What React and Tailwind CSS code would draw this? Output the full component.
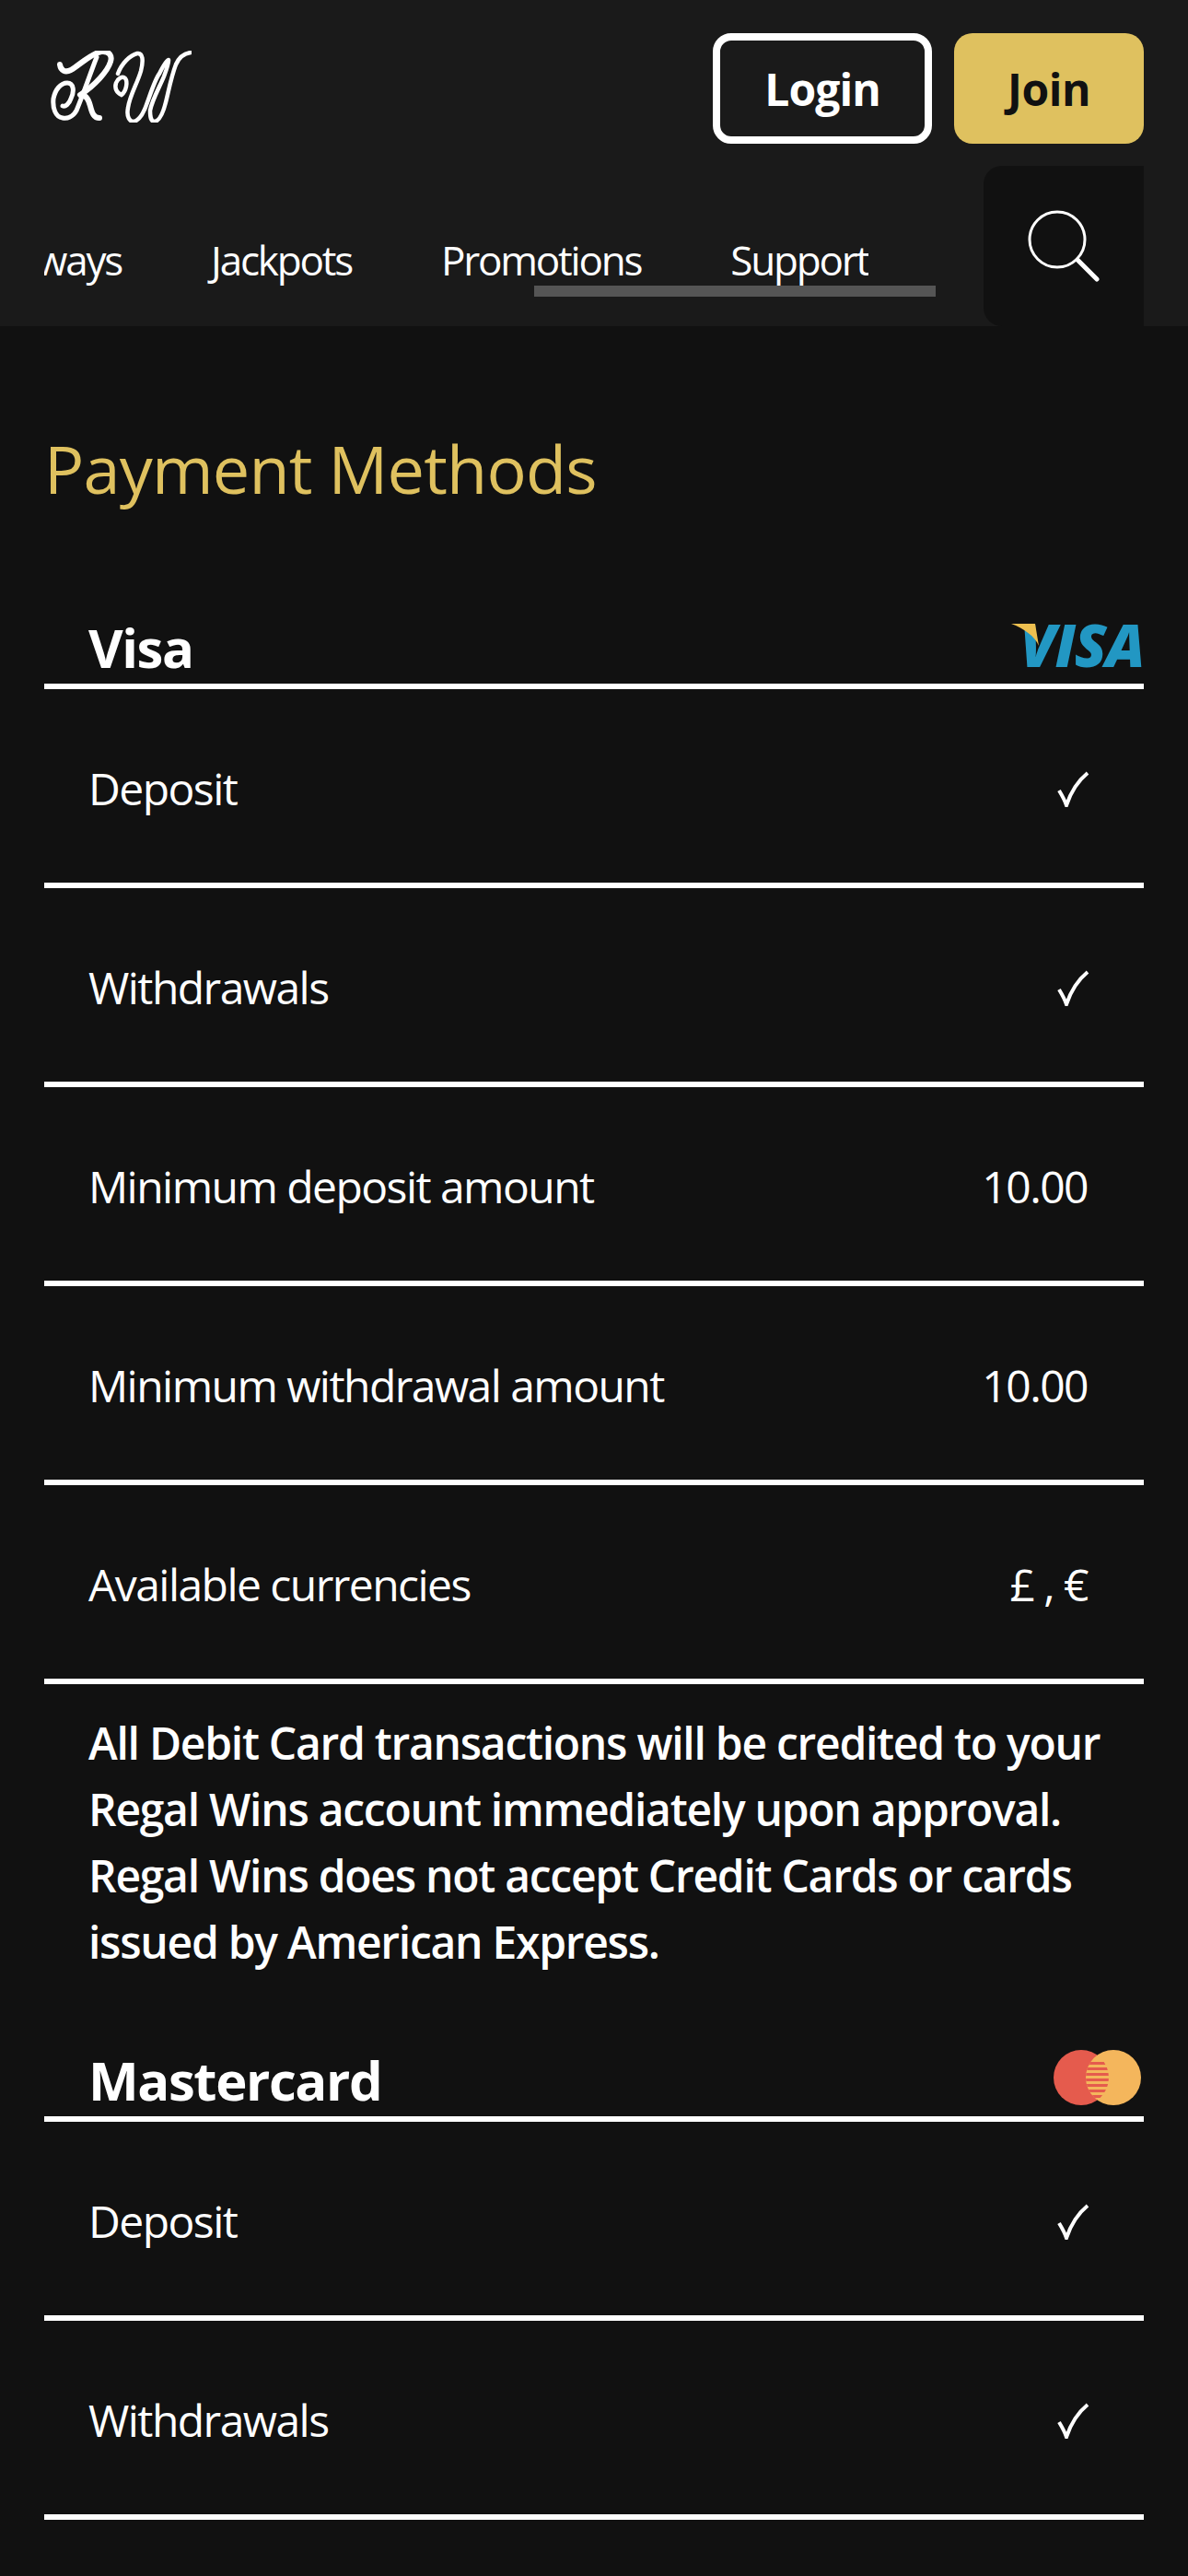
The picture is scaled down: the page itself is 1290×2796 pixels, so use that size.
import React from "react";

const visaRows = [
  { label: "Deposit", check: true },
  { label: "Withdrawals", check: true },
  { label: "Minimum deposit amount", value: "10.00" },
  { label: "Minimum withdrawal amount", value: "10.00" },
  { label: "Available currencies", value: "£ , €" },
];

const cardRows = [
  { label: "Deposit", check: true },
  { label: "Withdrawals", check: true },
];

function RwLogo() {
  return (
    <svg width="153" height="78" viewBox="0 0 153 78" fill="none" stroke="#fff" strokeLinecap="round" strokeLinejoin="round">
      <path d="M10 15 C11 22 16 24 22 21 C32 15 44 3 55 1 C64 0 67 6 65 12 C62 22 48 38 32 48" strokeWidth="6" />
      <path d="M50 7 C44 22 36 46 28 65 C24 72 18 74 13 73 C5 72 2 62 3 52 C5 42 11 35 18 35 C25 35 26 44 22 52 C20 58 16 61 13 60" strokeWidth="5" />
      <path d="M33 48 C38 48 41 52 43 60 C45 68 47 73 53 73" strokeWidth="6" />
      <path d="M77 48 C72 46 69 41 71 35 C73 30 78 27 81 30 C84 34 82 44 77 48" strokeWidth="4.5" />
      <path d="M73 25 C77 14 86 5 94 3 C100 2 101 10 98 22 C94 36 86 48 84 62 C82 72 86 77 90 77 C96 76 101 68 105 56 C110 42 114 30 118 25 C122 17 126 10 128 10 C129 12 126 20 123 28 C118 40 110 54 108 65 C108 73 109 77 113 77 C118 76 122 68 125 56 C128 44 131 28 136 15 C139 8 145 3 152 2" strokeWidth="4.5" />
    </svg>
  );
}

function SearchIcon() {
  return (
    <svg width="78" height="78" viewBox="0 0 78 78" fill="none" stroke="#fff">
      <circle cx="32" cy="32" r="30" strokeWidth="3" />
      <path d="M54 54 L75 75" strokeWidth="5" strokeLinecap="round" />
    </svg>
  );
}

function CheckMark() {
  return (
    <svg className="-mr-[3px]" width="36" height="40" viewBox="0 0 36 40" fill="none" stroke="#fff" strokeWidth="4">
      <path d="M2 22 C5 27 8 32 10 38 C14 26 22 12 33 3" />
    </svg>
  );
}

function VisaLogo() {
  return (
    <div className="relative flex h-[46px] w-[144px] items-center justify-end">
      <span className="text-[64px] leading-none font-extrabold tracking-[-1.5px] text-[#2297c3] italic">VISA</span>
      <svg className="absolute top-0 left-0" width="32" height="26" viewBox="0 0 32 26">
        <path d="M0 0 L26 0 L30 24 C26 14 14 5 0 0 Z" fill="#eec050" />
      </svg>
    </div>
  );
}

function MastercardLogo() {
  const stripes = [13, 19, 25, 31, 37, 43, 49];
  return (
    <svg width="95" height="60" viewBox="0 0 95 60">
      <defs>
        <clipPath id="orangeClip">
          <circle cx="65" cy="30" r="30" />
        </clipPath>
        <clipPath id="redClip">
          <circle cx="30" cy="30" r="30" />
        </clipPath>
      </defs>
      <circle cx="30" cy="30" r="30" fill="#e55b4d" />
      <circle cx="65" cy="30" r="30" fill="#f4b65c" />
      <g clipPath="url(#orangeClip)">
        <g clipPath="url(#redClip)">
          {stripes.map(function (y) {
            return <rect key={y} x="35" y={y} width="26" height="3" fill="#e55b4d" />;
          })}
        </g>
      </g>
    </svg>
  );
}

function MethodTable({ name, logo, rows }) {
  return (
    <section>
      <div className="flex items-end justify-between border-b-[6px] border-white pl-[48px]">
        <h2 className="text-[58px] leading-[78px] font-bold tracking-[-1.4px] text-white">{name}</h2>
        {logo}
      </div>
      {rows.map(function (row) {
        return (
          <div key={row.label} className="flex h-[216px] items-center justify-between border-b-[6px] border-white pt-[6px] pr-[61px] pl-[48px] text-[48px] tracking-[-1.55px] text-white">
            <span>{row.label}</span>
            {row.check ? <CheckMark /> : <span>{row.value}</span>}
          </div>
        );
      })}
    </section>
  );
}

export default function App() {
  return (
    <div className="h-[2796px] overflow-hidden bg-[#111111] font-['Open_Sans',sans-serif]">
      <header className="relative h-[354px] bg-[#1a1a1a] pr-[48px] pl-[48px]">
        <div className="flex h-[180px] items-start justify-between pt-[36px]">
          <div className="pt-[19px] pl-[7px]">
            <RwLogo />
          </div>
          <div className="flex gap-[24px]">
            <button className="h-[120px] w-[238px] rounded-[20px] border-[8px] border-white pt-[2px] text-[48px] font-bold tracking-[-0.9px] text-white">Login</button>
            <button className="h-[120px] w-[206px] rounded-[20px] bg-[#dfc15f] pt-[2px] text-[48px] font-bold tracking-[-0.4px] text-[#111111]">Join</button>
          </div>
        </div>
        <nav className="flex h-[174px] w-[895px] items-center justify-end gap-[97px] overflow-hidden pt-[30px] text-[44px] tracking-[-2.2px] whitespace-nowrap text-white">
          <span className="shrink-0">Giveaways</span>
          <span className="shrink-0">Jackpots</span>
          <span className="shrink-0">Promotions</span>
          <span className="shrink-0">Support</span>
        </nav>
        <div className="absolute top-[310px] left-[580px] h-[12px] w-[436px] bg-[#555555]" />
        <div className="absolute top-[180px] right-[48px] flex h-[174px] w-[174px] items-center justify-center rounded-l-[20px] bg-[#111111]">
          <SearchIcon />
        </div>
      </header>

      <main className="px-[48px] pt-[108px]">
        <h1 className="text-[72px] leading-[92px] font-normal tracking-[-0.8px] text-[#dfc15f]">Payment Methods</h1>
        <div className="mt-[110px]">
          <MethodTable name="Visa" logo={<div className="pb-[19px]"><VisaLogo /></div>} rows={visaRows} />
        </div>
        <p className="pt-[28px] pl-[48px] text-[48px] leading-[72px] font-semibold tracking-[-1.27px] text-white">
          All Debit Card transactions will be credited to your Regal Wins account immediately upon approval. Regal Wins does not accept Credit Cards or cards issued by American Express.
        </p>
        <div className="mt-[75px]">
          <MethodTable name="Mastercard" logo={<div className="mr-[3px] pb-[12px]"><MastercardLogo /></div>} rows={cardRows} />
        </div>
      </main>
    </div>
  );
}
